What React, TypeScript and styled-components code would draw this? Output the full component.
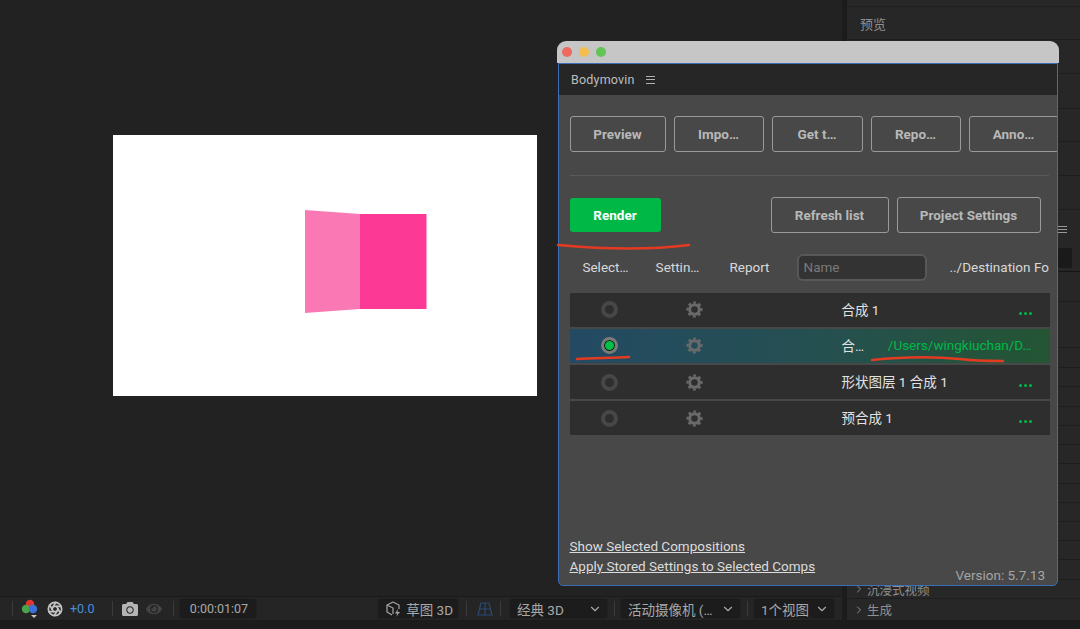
import React from 'react';
import styled, { createGlobalStyle } from 'styled-components';
import { Aperture, ChevronDown, ChevronRight } from 'lucide-react';
import { FaCamera, FaEye } from 'react-icons/fa';

const FONT = `Roboto, "Noto Sans CJK SC", sans-serif`;

const GlobalStyle = createGlobalStyle`
    html, body {
        margin: 0;
        padding: 0;
        background: #1c1c1c;
        font-family: ${FONT};
    }
    * { box-sizing: border-box; }
`;

const Page = styled.div`
    position: relative;
    width: 1080px;
    height: 629px;
    overflow: hidden;
    display: flex;
    background: #1c1c1c;
`;

const MainColumn = styled.div`
    width: 842px;
    display: flex;
    flex-direction: column;
`;

const Viewer = styled.div`
    height: 596px;
    padding: 135px 0 0 113px;
    background: #222222;
`;

const Comp = styled.div`
    width: 424px;
    height: 261px;
    background: #ffffff;
    padding: 75px 0 0 191px;
`;

const Toolbar = styled.div`
    height: 25px;
    display: flex;
    align-items: center;
    background: #252525;
    border-top: 1px solid #1a1a1a;
    border-bottom: 1px solid #1a1a1a;
    color: #a8a8a8;
    font-size: 13.5px;
`;

const Sep = styled.div<{ $left: number }>`
    width: 1px;
    height: 15px;
    background: #3a3a3a;
    flex-shrink: 0;
    margin-left: ${(p) => p.$left}px;
`;

const IconSlot = styled.div<{ $left: number; $width: number }>`
    flex-shrink: 0;
    width: ${(p) => p.$width}px;
    margin-left: ${(p) => p.$left}px;
    display: flex;
    align-items: center;
    justify-content: center;
`;

const Exposure = styled.span`
    flex-shrink: 0;
    margin-left: 6px;
    width: 28px;
    font-size: 12.5px;
    color: #4a90d9;
`;

const Chip = styled.div<{ $left: number; $width: number }>`
    flex-shrink: 0;
    height: 21px;
    width: ${(p) => p.$width}px;
    margin-left: ${(p) => p.$left}px;
    padding: 0 5px 0 7px;
    display: flex;
    align-items: center;
    justify-content: space-between;
    white-space: nowrap;
    background: #1c1c1c;
    border: 1px solid #212121;
    border-radius: 3px;
    color: #a8a8a8;
`;

const TimeChip = styled(Chip)`
    justify-content: center;
    font-size: 12.5px;
`;

const SidePanel = styled.div`
    width: 234px;
    height: 621px;
    margin-left: 4px;
    display: flex;
    flex-direction: column;
    background: #272727;
    border-left: 1px solid #1a1a1a;
`;

const SideRow = styled.div<{ $h: number; $line?: string }>`
    height: ${(p) => p.$h}px;
    flex-shrink: 0;
    padding-left: 13px;
    display: flex;
    align-items: center;
    border-bottom: 1px solid ${(p) => p.$line || '#1e1e1e'};
    color: #8f8f8f;
    font-size: 13px;
`;

const GroupRow = styled(SideRow)`
    padding-left: 6px;
    gap: 2px;
    font-size: 12.5px;
`;

const SearchRow = styled(SideRow)`
    padding: 16px 8px 0 0;
    flex-direction: column;
    align-items: flex-end;
    gap: 15px;
`;

const MiniMenu = styled.div`
    width: 9px;
    height: 7px;
    margin-right: 5px;
    border-top: 1px solid #999;
    border-bottom: 1px solid #999;
    background: linear-gradient(#999, #999) center / 100% 1px no-repeat;
`;

const SearchBox = styled.div`
    width: 14px;
    height: 20px;
    background: #1a1a1a;
    border-radius: 2px;
`;

const PluginWindow = styled.div`
    position: absolute;
    left: 557px;
    top: 41px;
    width: 502px;
    height: 545px;
    display: flex;
    flex-direction: column;
    color: #d2d2d2;
`;

const TitleBar = styled.div`
    height: 22px;
    flex-shrink: 0;
    padding-left: 5px;
    display: flex;
    align-items: center;
    gap: 7px;
    background: #c6c6c6;
    border-radius: 9px 9px 0 0;
`;

const Light = styled.span<{ $color: string }>`
    width: 10px;
    height: 10px;
    border-radius: 50%;
    background: ${(p) => p.$color};
`;

const Panel = styled.div`
    flex: 1;
    margin: 0 1px;
    display: flex;
    flex-direction: column;
    overflow: hidden;
    background: #484848;
    border: 1.5px solid #3b6eb4;
    border-radius: 0 0 5px 5px;
`;

const PanelHeader = styled.div`
    height: 31px;
    flex-shrink: 0;
    padding-left: 12px;
    display: flex;
    align-items: center;
    gap: 11px;
    background: #262626;
    color: #bdbdbd;
    font-size: 12.5px;
    letter-spacing: 0.2px;
`;

const Burger = styled.div`
    width: 9px;
    height: 8px;
    border-top: 1px solid #b0b0b0;
    border-bottom: 1px solid #b0b0b0;
    background: linear-gradient(#b0b0b0, #b0b0b0) center / 100% 1px no-repeat;
`;

const PanelBody = styled.div`
    flex: 1;
    padding: 20.5px 0 0 10.5px;
    display: flex;
    flex-direction: column;
    min-height: 0;
`;

const ButtonRow = styled.div`
    display: flex;
    gap: 8px;
    white-space: nowrap;
`;

const OutlineButton = styled.div<{ $width: number }>`
    flex-shrink: 0;
    width: ${(p) => p.$width}px;
    height: 36px;
    display: flex;
    align-items: center;
    justify-content: center;
    border: 1.5px solid #9a9a9a;
    border-radius: 3px;
    color: #b8b8b8;
    font-size: 13.5px;
    font-weight: 700;
`;

const Rule = styled.div`
    height: 1px;
    width: 479px;
    margin-top: 23px;
    background: #5a5a5a;
`;

const ActionRow = styled.div`
    margin-top: 21px;
    width: 471px;
    display: flex;
    align-items: center;
    gap: 8px;
`;

const RenderButton = styled.div`
    width: 91px;
    height: 34px;
    margin-right: auto;
    display: flex;
    align-items: center;
    justify-content: center;
    background: #00b846;
    border-radius: 3px;
    color: #ffffff;
    font-size: 13.5px;
    font-weight: 700;
`;

const ColumnRow = styled.div`
    margin-top: 21px;
    width: 480px;
    height: 27px;
    display: flex;
    align-items: center;
    white-space: nowrap;
    font-size: 13.5px;
    color: #d8d8d8;
`;

const ColumnLabel = styled.div<{ $width: number }>`
    width: ${(p) => p.$width}px;
    text-align: center;
`;

const NameInput = styled.div`
    width: 130px;
    height: 27px;
    margin-left: 11px;
    padding-left: 5px;
    display: flex;
    align-items: center;
    background: #333333;
    border: 2px solid #585858;
    border-radius: 6px;
    color: #7a7a7a;
`;

const DestinationLabel = styled.div`
    margin-left: 23px;
`;

const CompList = styled.div`
    margin-top: 12px;
    width: 480px;
    display: flex;
    flex-direction: column;
    gap: 2.3px;
`;

const CompRow = styled.div<{ $selected?: boolean }>`
    height: 34px;
    display: grid;
    grid-template-columns: 79px 92px 101px 1fr;
    align-items: center;
    background: ${(p) => (p.$selected ? 'linear-gradient(to right, #234a63 0%, #25504f 55%, #245533 100%)' : '#2e2e2e')};
    font-size: 13.5px;
    color: #e2e2e2;
`;

const Radio = styled.div<{ $on?: boolean }>`
    justify-self: center;
    width: 17px;
    height: 17px;
    border-radius: 50%;
    border: ${(p) => (p.$on ? '3px solid #7a7a7a' : '4px solid #474747')};
    background: ${(p) => (p.$on ? '#00c04a' : '#2e2e2e')};
    box-shadow: ${(p) => (p.$on ? 'inset 0 0 0 1px #111' : 'none')};
`;

const GearSlot = styled.div`
    justify-self: center;
    display: flex;
`;

const NameCell = styled.div`
    display: flex;
    align-items: center;
    justify-content: space-between;
    padding: 0 18px 2px 0;
    white-space: nowrap;
`;

const Dots = styled.span`
    margin-top: 9px;
    display: flex;
    gap: 2px;
    & i {
        width: 3px;
        height: 3px;
        border-radius: 50%;
        background: #00b846;
    }
`;

const PathText = styled.span`
    color: #00b846;
    font-size: 13.5px;
`;

const Footer = styled.div`
    margin-top: auto;
    padding: 0 12px 2px 0;
    display: flex;
    align-items: flex-end;
    justify-content: space-between;
`;

const FooterLinks = styled.div`
    display: flex;
    flex-direction: column;
    gap: 3px;
    padding-bottom: 8px;
`;

const FooterLink = styled.a`
    color: #dcdcdc;
    font-size: 13.5px;
    line-height: 17px;
    text-decoration: underline;
`;

const Version = styled.div`
    color: #a5a5a5;
    font-size: 13.5px;
`;

const Scribbles = styled.svg`
    position: absolute;
    left: 0;
    top: 0;
    pointer-events: none;
`;

const comps = [
    { name: '合成 1' },
    { name: '合…', selected: true },
    { name: '形状图层 1 合成 1' },
    { name: '预合成 1' },
];

const sideRows = [34, 35, 33, 34, 34];
const thinRows = [30, 46, 20, 19, 20, 19, 19, 19, 20, 19, 19, 19, 19, 20];

const RgbIcon = () => (
    <svg width="20" height="22" viewBox="0 0 20 22">
        <circle cx="10" cy="6" r="4.2" fill="#e0352f" />
        <circle cx="6" cy="11" r="4.2" fill="#4aa24a" />
        <circle cx="13" cy="11" r="4.2" fill="#3d6fd8" />
        <path d="M11 17h6l-3 3z" fill="#c8c8c8" />
    </svg>
);

const DraftIcon = () => (
    <svg width="18" height="18" viewBox="0 0 18 18" fill="none" stroke="#a8a8a8" strokeWidth="1.2">
        <path d="M8 2l6 3v4M8 2L2 5v7l5 3M2 5l6 3v6" />
        <path d="M13 9l-3 4.5h2.5L11 17l4-5h-2.5z" fill="#a8a8a8" stroke="none" />
    </svg>
);

const GridIcon = () => (
    <svg width="16" height="14" viewBox="0 0 16 14" fill="none" stroke="#2b4a72" strokeWidth="1.2">
        <path d="M4 1h8l3 12H1zM8 1v12M2.5 7h11" />
    </svg>
);

const GearIcon = () => (
    <svg width="17" height="17" viewBox="0 0 17 17" fill="none" stroke="#6a6a6a">
        <circle cx="8.5" cy="8.5" r="4.8" strokeWidth="3" />
        <circle cx="8.5" cy="8.5" r="7" strokeWidth="2.2" strokeDasharray="2.9 2.6" strokeDashoffset="1.45" transform="rotate(-90 8.5 8.5)" />
    </svg>
);

export default function App() {
    return (
        <Page>
            <GlobalStyle />
            <MainColumn>
                <Viewer>
                    <Comp>
                        <svg width="123" height="104" viewBox="0 0 123 104">
                            <path d="M1 0L56 4V99L1 103Z" fill="#fa79b4" />
                            <path d="M56 4H122.5V99H56Z" fill="#fc3a95" />
                        </svg>
                    </Comp>
                </Viewer>
                <Toolbar>
                    <Sep $left={12} />
                    <IconSlot $left={7} $width={20}>
                        <RgbIcon />
                    </IconSlot>
                    <IconSlot $left={6} $width={18}>
                        <Aperture size={16} color="#c4c4c4" strokeWidth={2.6} />
                    </IconSlot>
                    <Exposure>+0.0</Exposure>
                    <Sep $left={14} />
                    <IconSlot $left={8} $width={18}>
                        <FaCamera size={16} color="#b4b4b4" />
                    </IconSlot>
                    <IconSlot $left={6} $width={18}>
                        <FaEye size={16} color="#444444" />
                    </IconSlot>
                    <Sep $left={10} />
                    <TimeChip $left={5} $width={78}>0:00:01:07</TimeChip>
                    <Chip $left={120} $width={82}>
                        <DraftIcon />
                        草图 3D
                    </Chip>
                    <Sep $left={7} />
                    <IconSlot $left={10} $width={16}>
                        <GridIcon />
                    </IconSlot>
                    <Sep $left={7} />
                    <Chip $left={8} $width={99}>
                        经典 3D
                        <ChevronDown size={14} />
                    </Chip>
                    <Sep $left={6} />
                    <Chip $left={5} $width={121}>
                        活动摄像机 (…
                        <ChevronDown size={14} />
                    </Chip>
                    <Sep $left={6} />
                    <Chip $left={5} $width={82}>
                        1个视图
                        <ChevronDown size={14} />
                    </Chip>
                </Toolbar>
            </MainColumn>
            <SidePanel>
                <SideRow $h={7} />
                <SideRow $h={33}>预览</SideRow>
                {sideRows.map((h, i) => (
                    <SideRow key={i} $h={h} />
                ))}
                <SearchRow $h={62} $line="#141414">
                    <MiniMenu />
                    <SearchBox />
                </SearchRow>
                {thinRows.map((h, i) => (
                    <SideRow key={i} $h={h} />
                ))}
                <GroupRow $h={19}>
                    <ChevronRight size={12} />
                    沉浸式视频
                </GroupRow>
                <GroupRow $h={22} $line="#1a1a1a">
                    <ChevronRight size={12} />
                    生成
                </GroupRow>
            </SidePanel>
            <PluginWindow>
                <TitleBar>
                    <Light $color="#ee6a5f" />
                    <Light $color="#f5bd4f" />
                    <Light $color="#61c454" />
                </TitleBar>
                <Panel>
                    <PanelHeader>
                        Bodymovin
                        <Burger />
                    </PanelHeader>
                    <PanelBody>
                        <ButtonRow>
                            <OutlineButton $width={96}>Preview</OutlineButton>
                            <OutlineButton $width={90}>Impo…</OutlineButton>
                            <OutlineButton $width={91}>Get t…</OutlineButton>
                            <OutlineButton $width={90}>Repo…</OutlineButton>
                            <OutlineButton $width={90}>Anno…</OutlineButton>
                        </ButtonRow>
                        <Rule />
                        <ActionRow>
                            <RenderButton>Render</RenderButton>
                            <OutlineButton $width={118}>Refresh list</OutlineButton>
                            <OutlineButton $width={144}>Project Settings</OutlineButton>
                        </ActionRow>
                        <ColumnRow>
                            <ColumnLabel $width={72}>Select…</ColumnLabel>
                            <ColumnLabel $width={72}>Settin…</ColumnLabel>
                            <ColumnLabel $width={72}>Report</ColumnLabel>
                            <NameInput>Name</NameInput>
                            <DestinationLabel>../Destination Fo</DestinationLabel>
                        </ColumnRow>
                        <CompList>
                            {comps.map((c) => (
                                <CompRow key={c.name} $selected={c.selected}>
                                    <Radio $on={c.selected} />
                                    <GearSlot>
                                        <GearIcon />
                                    </GearSlot>
                                    <span />
                                    <NameCell>
                                        {c.name}
                                        {c.selected ? (
                                            <PathText>/Users/wingkiuchan/D…</PathText>
                                        ) : (
                                            <Dots>
                                                <i />
                                                <i />
                                                <i />
                                            </Dots>
                                        )}
                                    </NameCell>
                                </CompRow>
                            ))}
                        </CompList>
                        <Footer>
                            <FooterLinks>
                                <FooterLink>Show Selected Compositions</FooterLink>
                                <FooterLink>Apply Stored Settings to Selected Comps</FooterLink>
                            </FooterLinks>
                            <Version>Version: 5.7.13</Version>
                        </Footer>
                    </PanelBody>
                </Panel>
            </PluginWindow>
            <Scribbles width="1080" height="629" viewBox="0 0 1080 629" fill="none" stroke="#e53a22" strokeWidth="2.5" strokeLinecap="round">
                <path d="M558 245C600 249 650 250 689 245" />
                <path d="M577 359C595 358 615 358 629 357" />
                <path d="M872 360C900 357 930 356 960 359C975 361 990 361 1003 361" />
            </Scribbles>
        </Page>
    );
}
